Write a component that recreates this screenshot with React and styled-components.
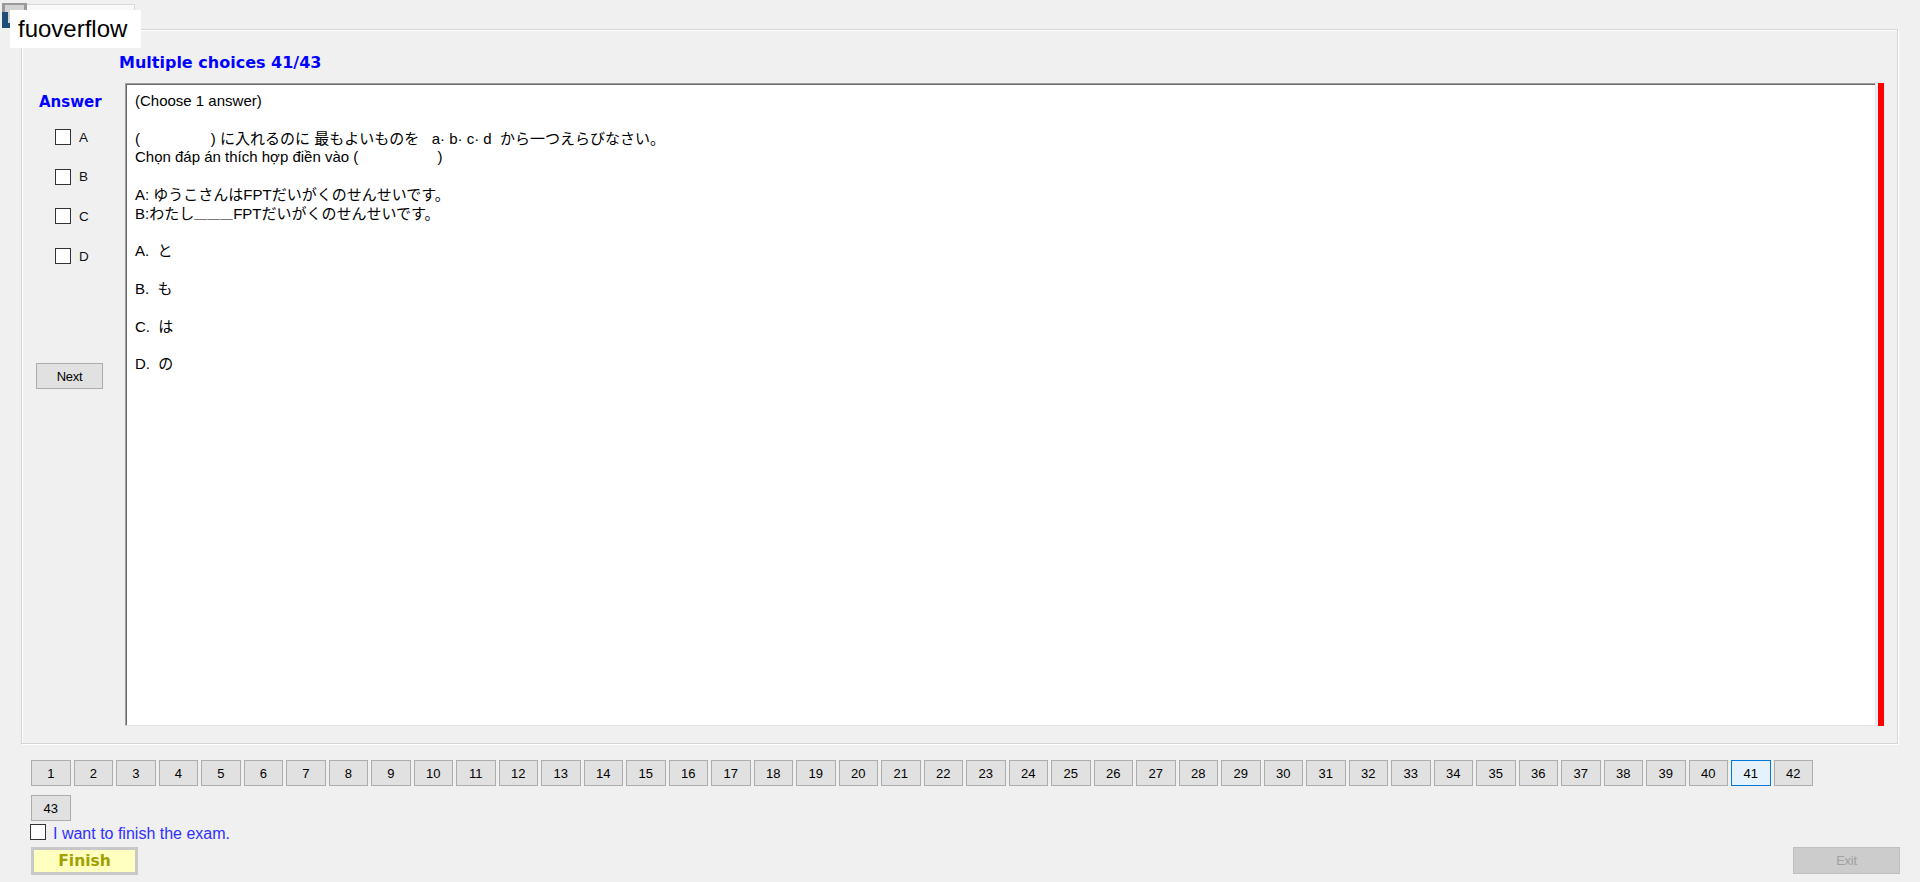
import React from 'react';
import styled, { createGlobalStyle } from 'styled-components';

const GlobalStyle = createGlobalStyle`
  html, body { margin: 0; padding: 0; background: #f0f0f0; }
  body {
    font-family: "Liberation Sans", Arial, "Noto Sans CJK JP", sans-serif;
    width: 1920px;
    height: 882px;
    overflow: hidden;
  }
  * { box-sizing: border-box; }
`;

const Page = styled.div`
  position: relative;
  width: 1920px;
  height: 882px;
  display: flex;
  flex-direction: column;
  background: #f0f0f0;
`;

const AppIcon = styled.svg`
  position: absolute;
  left: 1px;
  top: 2px;
  width: 27px;
  height: 27px;
`;

const TitleStrip = styled.div`
  position: absolute;
  left: 27px;
  top: 4px;
  width: 108px;
  height: 10px;
  background: #f9f9f9;
  border-top: 1px solid #d9d9d9;
  border-right: 1px solid #d9d9d9;
`;

const BrandLabel = styled.div`
  position: absolute;
  left: 10px;
  top: 10px;
  width: 131px;
  height: 38px;
  background: #ffffff;
  padding-left: 8px;
  font-family: "Liberation Sans", Arial, sans-serif;
  font-size: 24px;
  line-height: 38px;
  color: #000;
`;

const GroupBox = styled.section`
  margin: 29px 22px 0 21px;
  height: 715px;
  border: 1px solid #d5d5d5;
  box-shadow: inset 1px 1px 0 #ffffff, 1px 1px 0 #ffffff;
  display: flex;
  flex-direction: column;
  padding-right: 13px;
`;

const Heading = styled.div`
  padding: 23px 0 10px 97px;
  height: 53px;
  line-height: 20px;
  font-family: "DejaVu Sans", Verdana, sans-serif;
  font-weight: bold;
  font-size: 16px;
  color: #0000ff;
`;

const Body = styled.div`
  display: flex;
  height: 643px;
`;

const LeftPanel = styled.div`
  width: 103px;
  flex: none;
  display: flex;
  flex-direction: column;
`;

const AnswerTitle = styled.div`
  margin: 9px 0 0 17px;
  line-height: 20px;
  font-family: "DejaVu Sans", Verdana, sans-serif;
  font-weight: bold;
  font-size: 15px;
  color: #0000ff;
`;

const OptionList = styled.div`
  margin-top: 17px;
  padding-left: 33px;
  display: flex;
  flex-direction: column;
  gap: 23.7px;
`;

const OptionRow = styled.label`
  display: flex;
  align-items: center;
  height: 16px;
  gap: 8px;
`;

const CheckBox = styled.span`
  display: inline-block;
  flex: none;
  width: 16px;
  height: 16px;
  border: 1px solid #333333;
  background: #ffffff;
`;

const OptionLetter = styled.span`
  font-size: 13.5px;
  color: #111;
`;

const NextButton = styled.button`
  margin: 99px 0 0 14px;
  width: 67px;
  height: 26px;
  padding: 0;
  background: #e1e1e1;
  border: 1px solid #adadad;
  font-family: "Liberation Sans", Arial, sans-serif;
  font-size: 13px;
  letter-spacing: -0.3px;
  color: #000;
`;

const ContentBox = styled.div`
  width: 1751px;
  flex: none;
  background: #ffffff;
  border-top: 1px solid #a0a0a0;
  border-left: 1px solid #a0a0a0;
  border-right: 1px solid #e3e3e3;
  border-bottom: 1px solid #e3e3e3;
  box-shadow: inset 1px 1px 0 #696969;
  padding: 8px 9px;
  font-size: 15px;
  color: #000;
`;

const Line = styled.div`
  height: 18.8px;
  line-height: 18.8px;
  white-space: pre;
`;

const Blank = styled.span`
  font-family: "Noto Sans CJK JP", sans-serif;
  font-size: 12.5px;
  letter-spacing: 0.5px;
`;

const RedBar = styled.div`
  width: 6px;
  flex: none;
  margin-left: 2px;
  background: #ff0000;
`;

const Pagination = styled.div`
  margin: 16px 0 0 31px;
  width: 1800px;
  display: flex;
  flex-wrap: wrap;
  column-gap: 3px;
  row-gap: 9px;
`;

const PageButton = styled.button`
  width: 39.5px;
  height: 26px;
  padding: 0;
  background: ${(p) => (p.$active ? '#e5f1fb' : '#e1e1e1')};
  border: 1px solid ${(p) => (p.$active ? '#0078d7' : '#adadad')};
  font-family: "Liberation Sans", Arial, sans-serif;
  font-size: 13px;
  color: #000;
`;

const FinishCheckRow = styled.label`
  margin: 3px 0 0 30px;
  display: flex;
  align-items: flex-start;
  gap: 7px;
`;

const FinishText = styled.span`
  margin-top: 1px;
  line-height: 18px;
  font-size: 16px;
  color: #2f2fff;
`;

const BottomBar = styled.div`
  margin-top: 4px;
  padding: 0 20px 0 31px;
  display: flex;
  justify-content: space-between;
  align-items: flex-start;
`;

const FinishButton = styled.button`
  width: 107px;
  height: 28px;
  padding: 0;
  background: #ffffc0;
  border: 3px solid #c8c8c8;
  font-family: "DejaVu Sans", Verdana, sans-serif;
  font-weight: bold;
  font-size: 15.5px;
  color: #a0a000;
`;

const ExitButton = styled.button`
  width: 107px;
  height: 27px;
  padding: 0;
  background: #cccccc;
  border: 1px solid #bfbfbf;
  font-family: "Liberation Sans", Arial, sans-serif;
  font-size: 13px;
  letter-spacing: -0.3px;
  color: #a0a0a0;
`;

const options = ['A', 'B', 'C', 'D'];
const pages = Array.from({ length: 43 }, (_, i) => i + 1);

const sp = (n) => ' '.repeat(n);

export default function App() {
  return (
    <>
      <GlobalStyle />
      <Page>
        <AppIcon viewBox="0 0 27 27">
          <rect x="1" y="1" width="25" height="25" fill="#9a9a9a" />
          <rect x="4" y="3" width="19" height="18" fill="#d4d4d4" />
          <rect x="1" y="10" width="6" height="16" fill="#1f4e79" />
          <rect x="1" y="21" width="13" height="5" fill="#1f4e79" />
        </AppIcon>
        <TitleStrip />
        <BrandLabel>fuoverflow</BrandLabel>

        <GroupBox>
          <Heading>Multiple choices 41/43</Heading>
          <Body>
            <LeftPanel>
              <AnswerTitle>Answer</AnswerTitle>
              <OptionList>
                {options.map((o) => (
                  <OptionRow key={o}>
                    <CheckBox />
                    <OptionLetter>{o}</OptionLetter>
                  </OptionRow>
                ))}
              </OptionList>
              <NextButton>Next</NextButton>
            </LeftPanel>
            <ContentBox>
              <Line>(Choose 1 answer)</Line>
              <Line> </Line>
              <Line>{'(' + sp(17) + ') に入れるのに 最もよいものを' + sp(3) + 'a· b· c· d' + sp(2) + 'から一つえらびなさい。'}</Line>
              <Line>{'Chọn đáp án thích hợp điền vào (' + sp(19) + ')'}</Line>
              <Line> </Line>
              <Line>A: ゆうこさんはFPTだいがくのせんせいです。</Line>
              <Line>
                B:わたし<Blank>＿＿＿</Blank>FPTだいがくのせんせいです。
              </Line>
              <Line> </Line>
              <Line>{'A.  と'}</Line>
              <Line> </Line>
              <Line>{'B.  も'}</Line>
              <Line> </Line>
              <Line>{'C.  は'}</Line>
              <Line> </Line>
              <Line>{'D.  の'}</Line>
            </ContentBox>
            <RedBar />
          </Body>
        </GroupBox>

        <Pagination>
          {pages.map((n) => (
            <PageButton key={n} $active={n === 41}>
              {n}
            </PageButton>
          ))}
        </Pagination>

        <FinishCheckRow>
          <CheckBox />
          <FinishText>I want to finish the exam.</FinishText>
        </FinishCheckRow>

        <BottomBar>
          <FinishButton>Finish</FinishButton>
          <ExitButton>Exit</ExitButton>
        </BottomBar>
      </Page>
    </>
  );
}
